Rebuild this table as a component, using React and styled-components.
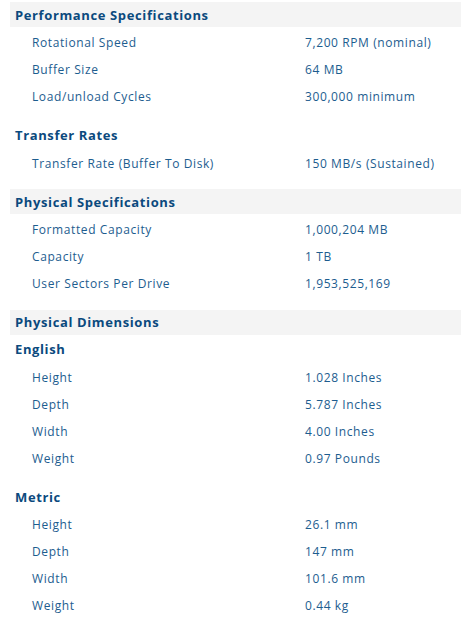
import React from "react";
import styled, { createGlobalStyle } from "styled-components";

const GlobalStyle = createGlobalStyle`
  html, body {
    margin: 0;
    padding: 0;
    background: #ffffff;
  }
  body {
    font-family: "Open Sans", "Noto Sans", sans-serif;
  }
`;

const specs = [
  {
    title: "Performance Specifications",
    shaded: true,
    rows: [
      ["Rotational Speed", "7,200 RPM (nominal)"],
      ["Buffer Size", "64 MB"],
      ["Load/unload Cycles", "300,000 minimum"],
    ],
  },
  {
    title: "Transfer Rates",
    rows: [["Transfer Rate (Buffer To Disk)", "150 MB/s (Sustained)"]],
  },
  {
    title: "Physical Specifications",
    shaded: true,
    rows: [
      ["Formatted Capacity", "1,000,204 MB"],
      ["Capacity", "1 TB"],
      ["User Sectors Per Drive", "1,953,525,169"],
    ],
  },
  {
    title: "Physical Dimensions",
    shaded: true,
    flush: true,
    rows: [],
  },
  {
    title: "English",
    rows: [
      ["Height", "1.028 Inches"],
      ["Depth", "5.787 Inches"],
      ["Width", "4.00 Inches"],
      ["Weight", "0.97 Pounds"],
    ],
  },
  {
    title: "Metric",
    rows: [
      ["Height", "26.1 mm"],
      ["Depth", "147 mm"],
      ["Width", "101.6 mm"],
      ["Weight", "0.44 kg"],
    ],
  },
];

function App() {
  return (
    <>
      <GlobalStyle />
      <Page>
        {specs.map((group) => (
          <Group key={group.title} $flush={group.flush}>
            <Heading $shaded={group.shaded}>{group.title}</Heading>
            {group.rows.map(([label, value]) => (
              <Row key={label}>
                <Label>{label}</Label>
                <Value>{value}</Value>
              </Row>
            ))}
          </Group>
        ))}
      </Page>
    </>
  );
}

const Page = styled.div`
  padding: 2px 0 0 10px;
  width: 451px;
`;

const Group = styled.div`
  display: flex;
  flex-direction: column;
  margin-bottom: ${(p) => (p.$flush ? "0" : "12.5px")};
`;

const Heading = styled.div`
  height: 25px;
  display: flex;
  align-items: center;
  padding-left: 5px;
  background: ${(p) => (p.$shaded ? "#f4f4f4" : "transparent")};
  color: #0b4a7e;
  font-size: 13px;
  font-weight: 700;
  letter-spacing: 0.62px;
  margin-bottom: 2px;
`;

const Row = styled.div`
  height: 27px;
  display: grid;
  grid-template-columns: 273px 1fr;
  align-items: center;
  padding-left: 22px;
  font-size: 12px;
  color: #1d5d8f;
  letter-spacing: 0.6px;
`;

const Label = styled.span``;

const Value = styled.span``;

export default App;
